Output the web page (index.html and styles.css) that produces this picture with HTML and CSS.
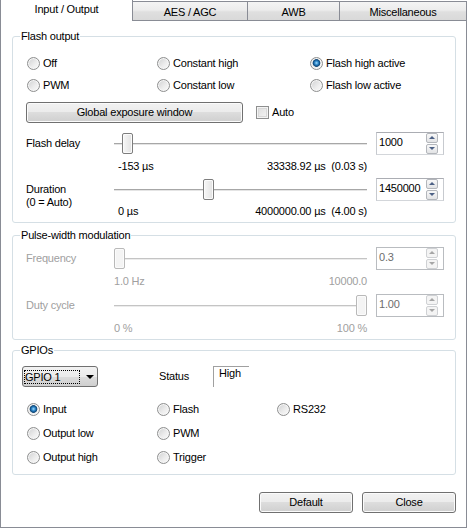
FILE: index.html
```html
<!DOCTYPE html>
<html lang="en">
<head>
    <meta charset="UTF-8">
    <title>Input / Output</title>
    <link rel="stylesheet" href="styles.css">
</head>
<body>
    <div class="dialog">
        <!-- tab strip -->
        <div class="tabs">
            <div class="tab active">Input / Output</div>
            <div class="tab aes">AES / AGC</div>
            <div class="tab awb">AWB</div>
            <div class="tab misc">Miscellaneous</div>
        </div>

        <div class="page">
            <!-- Flash output -->
            <div class="group">
                <span class="group-title">Flash output</span>
                <div class="radio-grid flash-radios">
                    <label class="radio"><span class="dot"></span>Off</label>
                    <label class="radio"><span class="dot"></span>Constant high</label>
                    <label class="radio"><span class="dot checked"></span>Flash high active</label>
                    <label class="radio"><span class="dot"></span>PWM</label>
                    <label class="radio"><span class="dot"></span>Constant low</label>
                    <label class="radio"><span class="dot"></span>Flash low active</label>
                </div>

                <div class="button-row">
                    <button class="btn wide">Global exposure window</button>
                    <label class="check"><span class="box"></span>Auto</label>
                </div>

                <div class="sliders flash-sliders">
                    <div class="s-label">Flash delay</div>
                    <div class="slider"><span class="thumb" style="left: 8px"></span></div>
                    <div class="spin">
                        <span class="spin-value">1000</span>
                        <span class="spin-btns"><span class="up"></span><span class="down"></span></span>
                    </div>
                    <div></div>
                    <div class="range indent"><span>-153 µs</span><span>33338.92 µs&nbsp; (0.03 s)</span></div>
                    <div></div>

                    <div class="s-label two-line">Duration<br>(0 = Auto)</div>
                    <div class="slider"><span class="thumb" style="left: 89px"></span></div>
                    <div class="spin">
                        <span class="spin-value">1450000</span>
                        <span class="spin-btns"><span class="up"></span><span class="down"></span></span>
                    </div>
                    <div class="range indent"><span>0 µs</span><span>4000000.00 µs&nbsp; (4.00 s)</span></div>
                    <div></div>
                </div>
            </div>

            <!-- Pulse-width modulation (disabled) -->
            <div class="group pwm disabled">
                <span class="group-title">Pulse-width modulation</span>
                <div class="sliders pwm-sliders">
                    <div class="s-label">Frequency</div>
                    <div class="slider"><span class="thumb" style="left: 0px"></span></div>
                    <div class="spin">
                        <span class="spin-value">0.3</span>
                        <span class="spin-btns"><span class="up"></span><span class="down"></span></span>
                    </div>
                    <div></div>
                    <div class="range"><span>1.0 Hz</span><span>10000.0</span></div>
                    <div></div>

                    <div class="s-label">Duty cycle</div>
                    <div class="slider"><span class="thumb" style="left: 242px"></span></div>
                    <div class="spin">
                        <span class="spin-value">1.00</span>
                        <span class="spin-btns"><span class="up"></span><span class="down"></span></span>
                    </div>
                    <div></div>
                    <div class="range"><span>0 %</span><span>100 %</span></div>
                    <div></div>
                </div>
            </div>

            <!-- GPIOs -->
            <div class="group gpio">
                <span class="group-title">GPIOs</span>
                <div class="gpio-top">
                    <div class="combo"><span class="combo-text">GPIO 1</span><span class="combo-arrow"></span></div>
                    <div class="status-label">Status</div>
                    <div class="status-box">High</div>
                </div>
                <div class="radio-grid gpio-radios">
                    <label class="radio"><span class="dot checked"></span>Input</label>
                    <label class="radio"><span class="dot"></span>Flash</label>
                    <label class="radio"><span class="dot"></span>RS232</label>
                    <label class="radio"><span class="dot"></span>Output low</label>
                    <label class="radio"><span class="dot"></span>PWM</label>
                    <div></div>
                    <label class="radio"><span class="dot"></span>Output high</label>
                    <label class="radio"><span class="dot"></span>Trigger</label>
                    <div></div>
                </div>
            </div>

            <div class="footer">
                <button class="btn">Default</button>
                <button class="btn">Close</button>
            </div>
        </div>
    </div>
</body>
</html>
```

FILE: styles.css
```css
* {
    box-sizing: border-box;
}

body {
    margin: 0;
    background-color: #fff;
    color: #000;
    font-family: "Liberation Sans", Arial, sans-serif;
    font-size: 11px;
    line-height: 13px;
    letter-spacing: -0.2px;
}

.dialog {
    width: 467px;
}

/* tabs */
.tabs {
    display: flex;
    height: 21px;
}

.tab {
    text-align: center;
    white-space: nowrap;
}

.tab.active {
    width: 133px;
    height: 21px;
    padding-top: 3px;
    background-color: #fff;
    border-left: 1px solid #898c95;
    border-right: 1px solid #898c95;
}

.tab.aes,
.tab.awb,
.tab.misc {
    height: 20px;
    margin-top: 1px;
    padding-top: 4px;
    border-top: 1px solid #898c95;
    border-right: 1px solid #898c95;
    border-bottom: 1px solid #898c95;
    background: linear-gradient(#f4f4f4, #ececec 45%, #dfdfdf 55%, #d9d9d9);
}

.tab.aes { width: 115px; }
.tab.awb { width: 92px; }
.tab.misc { width: 127px; }

.page {
    height: 507px;
    padding: 15px 10px 0 11px;
    border-left: 1px solid #898c95;
    border-right: 1px solid #898c95;
    border-bottom: 1px solid #898c95;
}

/* group boxes */
.group {
    position: relative;
    border: 1px solid #d5dfe5;
    border-radius: 3px;
    padding-top: 15px;
}

.group-title {
    position: absolute;
    top: -7px;
    left: 7px;
    padding: 0 1px;
    background-color: #fff;
    color: #000;
}

.group.pwm {
    margin-top: 12px;
    padding-top: 10px;
}

.group.gpio {
    margin-top: 10px;
    padding-bottom: 5px;
}

.disabled {
    color: #a0a0a0;
}

/* radio buttons */
.radio-grid {
    display: grid;
    padding-left: 14px;
}

.flash-radios {
    grid-template-columns: 130px 153px auto;
    grid-auto-rows: 22px;
}

.gpio-radios {
    grid-template-columns: 130px 120px auto;
    grid-auto-rows: 24px;
    margin-top: 10px;
}

.radio {
    display: flex;
    align-items: center;
    gap: 3px;
    white-space: nowrap;
}

.dot {
    width: 13px;
    height: 13px;
    border-radius: 50%;
    border: 1px solid #8e8f8f;
    box-shadow: inset 0 0 0 1px #f6f6f6;
    background: linear-gradient(135deg, #cfd0d1, #eeeeee 60%, #fafafa);
}

.dot.checked {
    background:
        radial-gradient(circle at 50% 45%, #a8ddf7 0, #3d95d6 1.5px, #10558f 3px, #1d4f7a 3.6px, rgba(0, 0, 0, 0) 4.2px),
        linear-gradient(135deg, #cfd0d1, #eeeeee 60%, #fafafa);
}

/* buttons */
.btn {
    height: 21px;
    padding: 0;
    border: 1px solid #707070;
    border-radius: 3px;
    background: linear-gradient(#f2f2f2, #ebebeb 50%, #dddddd 50%, #cfcfcf);
    box-shadow: inset 0 0 0 1px #fbfbfb;
    color: #000;
    font: inherit;
    letter-spacing: inherit;
}

.button-row {
    display: flex;
    align-items: center;
    margin-top: 6px;
    padding-left: 13px;
}

.btn.wide {
    width: 217px;
}

.check {
    display: flex;
    align-items: center;
    gap: 3px;
    margin-left: 13px;
}

.box {
    width: 13px;
    height: 13px;
    border: 1px solid #8e8f8f;
    box-shadow: inset 0 0 0 1px #f4f4f4, inset 0 0 0 2px #d8d8d8;
    background: linear-gradient(135deg, #dcdcdc, #f6f6f6);
}

/* sliders */
.sliders {
    display: grid;
    grid-template-columns: 79px 253px 68px;
    column-gap: 9px;
    padding-left: 13px;
    align-items: center;
}

.flash-sliders {
    margin-top: 8px;
    grid-template-rows: 24px 22px 24px 21px;
}

.pwm-sliders {
    grid-template-rows: 24px 23px 24px 22px;
}

.s-label {
    white-space: nowrap;
}

.s-label.two-line {
    grid-row: span 2;
    align-self: start;
    margin-top: 6px;
}

.slider {
    position: relative;
    height: 24px;
    background: linear-gradient(#a7a7a7 0 1px, #e4e4e4 1px) no-repeat 0 12px / 100% 2px;
}

.thumb {
    position: absolute;
    top: 2px;
    width: 11px;
    height: 21px;
    border: 1px solid #7d7d7d;
    border-radius: 2px;
    box-shadow: inset 0 0 0 1px #fbfbfb;
    background: linear-gradient(90deg, #f7f7f7, #e2e2e2);
}

.disabled .slider {
    background: linear-gradient(#c4c4c4 0 1px, #ececec 1px) no-repeat 0 12px / 100% 2px;
}

.disabled .thumb {
    border-color: #b9b9b9;
    background: #f4f4f4;
}

.range {
    display: flex;
    justify-content: space-between;
    white-space: nowrap;
}

.range.indent {
    padding-left: 4px;
}

/* numeric up/down */
.spin {
    height: 23px;
    display: flex;
    align-items: center;
    justify-content: space-between;
    padding: 0 5px 0 2px;
    border: 1px solid;
    border-color: #abadb3 #c7cacf #d3d6da #c7cacf;
    background-color: #fff;
    color: #000;
}

.spin-value {
    margin-top: -2px;
}

.spin-btns {
    display: flex;
    flex-direction: column;
    gap: 1px;
}

.spin-btns span {
    width: 12px;
    height: 10px;
    display: flex;
    align-items: center;
    justify-content: center;
    border: 1px solid #b3b6bb;
    border-radius: 2px;
    background: linear-gradient(#f8f8f8, #e2e3e5);
}

.spin-btns .up::after {
    content: "";
    border-left: 3px solid transparent;
    border-right: 3px solid transparent;
    border-bottom: 3px solid #4d6185;
}

.spin-btns .down::after {
    content: "";
    border-left: 3px solid transparent;
    border-right: 3px solid transparent;
    border-top: 3px solid #4d6185;
}

.disabled .spin {
    border-color: #b9bcc0;
    color: #6d6d6d;
}

.disabled .spin-btns span {
    border-color: #cfd1d4;
    background: #f4f4f4;
}

.disabled .spin-btns .up::after {
    border-bottom-color: #a6a6a6;
}

.disabled .spin-btns .down::after {
    border-top-color: #a6a6a6;
}

/* GPIO selector */
.gpio-top {
    display: grid;
    grid-template-columns: 137px 54px 36px;
    align-items: center;
    padding-left: 9px;
}

.combo {
    width: 76px;
    height: 21px;
    display: flex;
    align-items: center;
    padding-left: 1px;
    border: 1px solid #707070;
    border-radius: 3px;
    background: linear-gradient(#f2f2f2, #ebebeb 50%, #dddddd 50%, #cfcfcf);
}

.combo-text {
    width: 56px;
    height: 14px;
    padding-left: 1px;
    line-height: 14px;
    outline: 1px dotted #000;
    outline-offset: -1px;
}

.combo-arrow {
    margin-left: 6px;
    border-left: 4px solid transparent;
    border-right: 4px solid transparent;
    border-top: 4px solid #000;
}

.status-box {
    height: 21px;
    padding-left: 5px;
    border-top: 1px solid #a0a0a0;
    border-left: 1px solid #a0a0a0;
}

/* bottom buttons */
.footer {
    display: flex;
    justify-content: flex-end;
    gap: 9px;
    margin-top: 17px;
}

.footer .btn {
    width: 94px;
}
```
